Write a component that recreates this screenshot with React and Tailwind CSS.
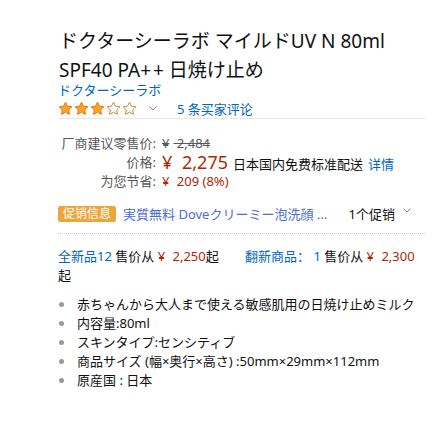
import React from "react";

const FONT = { fontFamily: '"Noto Sans", "Noto Sans CJK SC", sans-serif' };

function Star({ filled }) {
  return (
    <svg width="15" height="15" viewBox="0 0 24 24" className="block">
      <path
        d="M12 1.8l3.15 6.5 7.1 1-5.15 5 1.25 7.1L12 18.05 5.65 21.4l1.25-7.1-5.15-5 7.1-1z"
        fill={filled ? "#ffa41c" : "#ffffff"}
        stroke={filled ? "#de7921" : "#c98a32"}
        strokeWidth="1.6"
        strokeLinejoin="round"
      />
    </svg>
  );
}

function Chevron() {
  return (
    <svg width="8" height="5" viewBox="0 0 8 5" className="block">
      <polyline points="0.5,0.5 4,4 7.5,0.5" fill="none" stroke="#888" strokeWidth="1" />
    </svg>
  );
}

export default function App() {
  const bullets = [
    "赤ちゃんから大人まで使える敏感肌用の日焼け止めミルク",
    "内容量:80ml",
    "スキンタイプ:センシティブ",
    "商品サイズ (幅×奥行×高さ) :50mm×29mm×112mm",
    "原産国 : 日本",
  ];
  return (
    <div className="w-[442px] h-[422px] bg-white pl-[58px] pr-[17px] pt-[27px] text-[#0f1111]" style={FONT}>
      <h1 className="text-[19px] leading-[29px] font-normal pl-[1px]">
        ドクターシーラボ マイルドUV N 80ml SPF40 PA<span className="tracking-[2px]">+</span>+ 日焼け止め
      </h1>
      <div className="text-[13px] leading-[10px] text-[#0066c0]">ドクターシーラボ</div>
      <div className="mt-[5px] h-[19px] flex items-center border-b border-[#e7e7e7]">
        <div className="flex gap-[1px] pb-[1px]">
          <Star filled />
          <Star filled />
          <Star filled />
          <Star />
          <Star />
        </div>
        <div className="ml-[12px] mb-[1px]">
          <Chevron />
        </div>
        <span className="ml-[20px] text-[13px] leading-[18px] text-[#0066c0]">5 条买家评论</span>
      </div>

      <div className="pt-[15px] text-[13px] leading-[19px] grid grid-cols-[98px_1fr] gap-x-[6px]">
        <div className="text-right text-[#565959]">厂商建议零售价:</div>
        <div className="text-[#565959] line-through">
          <span className="mr-[4px]">¥</span> 2,484
        </div>
        <div className="text-right text-[#565959]">价格:</div>
        <div className="flex items-baseline whitespace-nowrap h-[19px]">
          <span className="text-[18px] leading-[19px] text-[#B12704]">
            <span className="mr-[5px]">¥</span> 2,275
          </span>
          <span className="ml-[5px]">日本国内免费标准配送</span>
          <span className="ml-[5px] text-[#0066c0]">详情</span>
        </div>
        <div className="text-right text-[#565959]">为您节省:</div>
        <div className="text-[#B12704]">
          <span className="mr-[4px]">¥</span> 209 (8%)
        </div>
      </div>

      <div className="mt-[13px] pb-[9px] border-b border-dotted border-[#cccccc]">
        <div className="flex items-center h-[20px] w-full">
          <span className="bg-[#eea53a] text-white text-[12px] leading-[16px] px-[5px] rounded-[2px]">促销信息</span>
          <span className="ml-[7px] text-[13px] leading-[19px] text-[#4d6cd0] whitespace-nowrap">実質無料 Doveクリーミー泡洗顔 ...</span>
          <span className="ml-auto text-[13px] leading-[19px]">1个促销</span>
          <div className="ml-[8px] mr-[14px] self-start mt-[4px]">
            <Chevron />
          </div>
        </div>
      </div>

      <div className="mt-[13px] text-[13px] leading-[19px] pr-[10px]">
        <span className="inline-block w-[187px] whitespace-nowrap">
          <span className="text-[#0066c0]">全新品12</span> 售价从{" "}
          <span className="text-[#B12704]">
            <span className="mr-[4px]">¥</span> 2,250
          </span>
          起
        </span>
        <span className="text-[#0066c0]">翻新商品： 1</span> 售价从{" "}
        <span className="text-[#B12704]">
          <span className="mr-[4px]">¥</span> 2,300
        </span>
        起
      </div>

      <ul className="mt-[10px] text-[13px] leading-[19px]">
        {bullets.map((b) => (
          <li key={b} className="flex items-center whitespace-nowrap">
            <span className="ml-[1px] w-[5px] h-[5px] rounded-full bg-[#9a9a9a] shrink-0" />
            <span className="ml-[13px]">{b}</span>
          </li>
        ))}
      </ul>
    </div>
  );
}
